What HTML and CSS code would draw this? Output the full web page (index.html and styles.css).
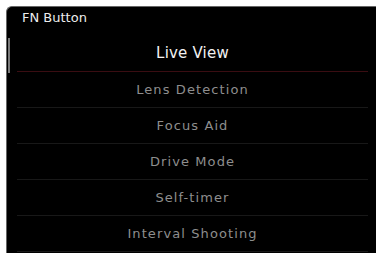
FILE: index.html
```html
<!DOCTYPE html>
<html>
<head>
<meta charset="utf-8">
<link rel="stylesheet" href="styles.css">
</head>
<body>
<div class="screen">
  <div class="scrollbar"></div>
  <div class="header">FN Button</div>
  <ul class="menu">
    <li class="item active">Live View</li>
    <li class="item">Lens Detection</li>
    <li class="item">Focus Aid</li>
    <li class="item">Drive Mode</li>
    <li class="item">Self-timer</li>
    <li class="item">Interval Shooting</li>
  </ul>
</div>
</body>
</html>
```
FILE: styles.css
```css
html, body {
  margin: 0;
  padding: 0;
  background: #ffffff;
  width: 376px;
  height: 253px;
  overflow: hidden;
}
.screen {
  position: relative;
  margin: 6px 0 0 6px;
  height: 247px;
  background: #000;
  border-top-left-radius: 6px;
  border-left: 1px solid #666;
  border-top: 1px solid #666;
  font-family: "DejaVu Sans", sans-serif;
  color: #8e8e8e;
}
.scrollbar {
  position: absolute;
  left: 1px;
  top: 31px;
  width: 2px;
  height: 35px;
  background: #7a7a7a;
}
.header {
  height: 29px;
  line-height: 22px;
  padding-left: 15px;
  font-size: 13px;
  color: #ececec;
}
.menu {
  list-style: none;
  margin: 0;
  padding: 0;
}
.item {
  height: 35px;
  line-height: 35px;
  margin: 0 8px 0 10px;
  border-bottom: 1px solid #181818;
  text-align: center;
  font-size: 13px;
  letter-spacing: 1.1px;
}
.item.active {
  color: #f2f2f2;
  font-size: 15px;
  letter-spacing: 0.2px;
  border-bottom-color: #3a0d12;
}
```
